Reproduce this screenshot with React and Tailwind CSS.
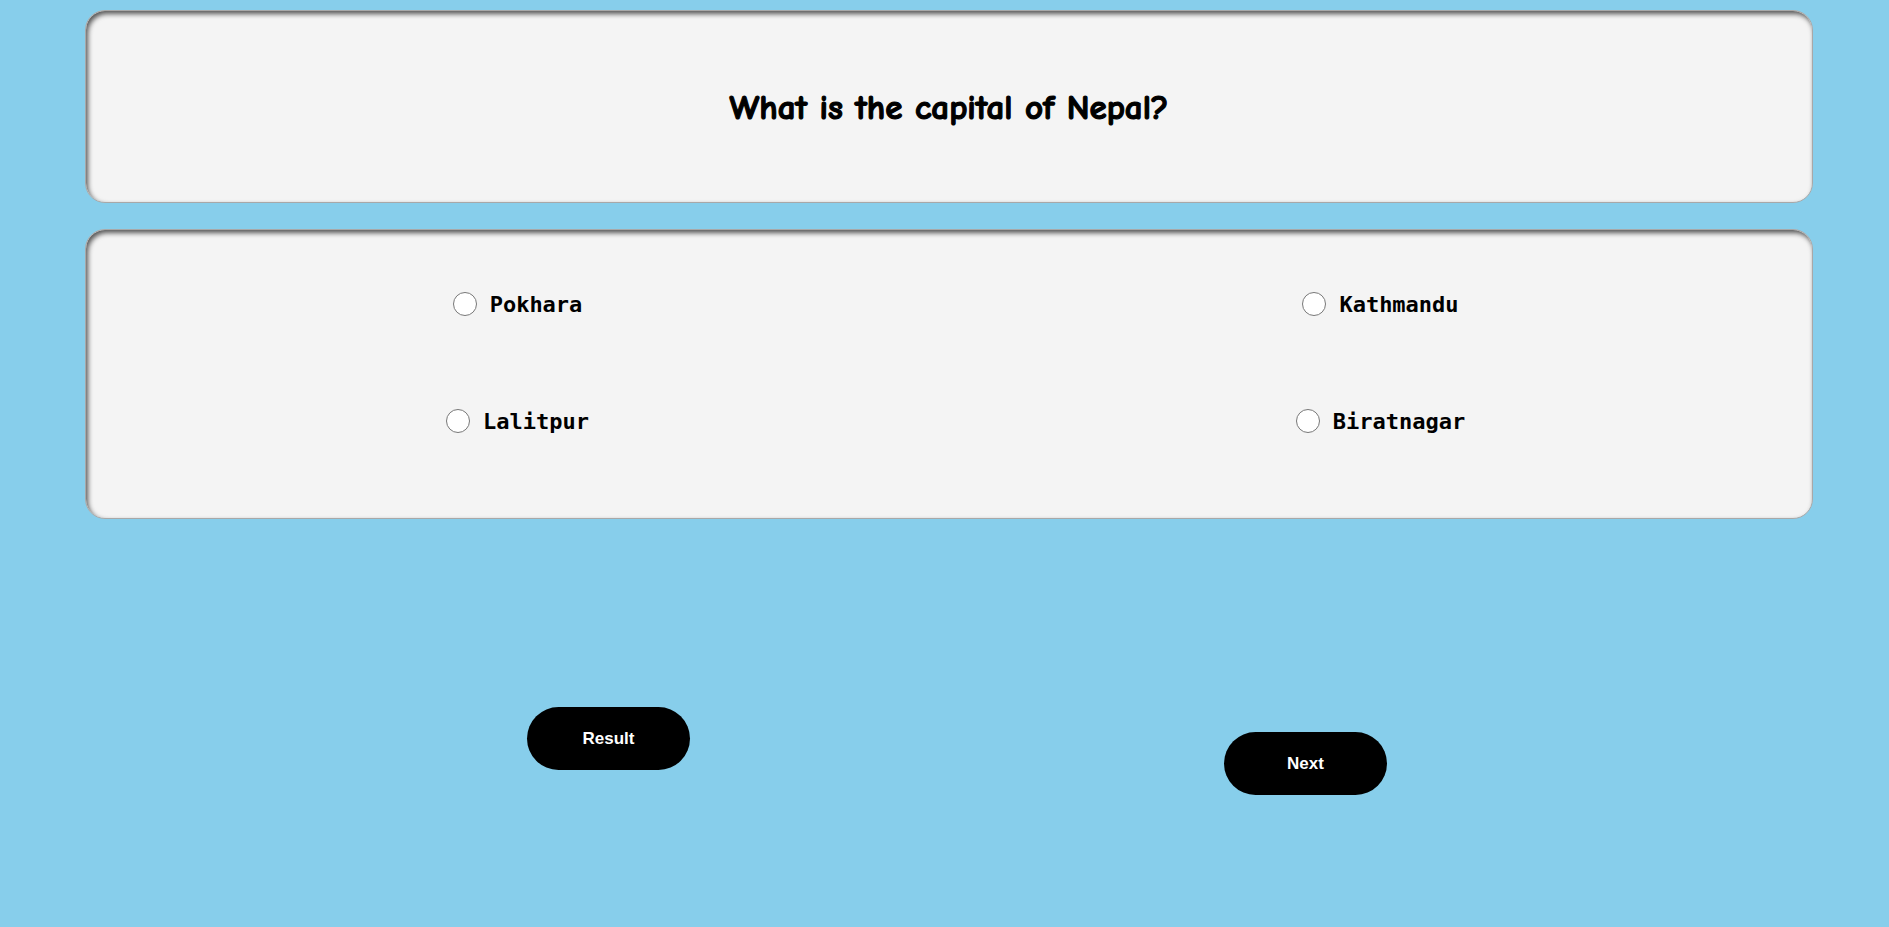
import { useState } from 'react';

const options = [
  { id: 'a', label: 'Pokhara' },
  { id: 'b', label: 'Kathmandu' },
  { id: 'c', label: 'Lalitpur' },
  { id: 'd', label: 'Biratnagar' },
];

export default function App() {
  const [selected, setSelected] = useState('');

  return (
    <div className="min-h-[927px] bg-[#87ceeb] pt-[10px]">
      {/* question */}
      <div className="ml-[85px] w-[1728px] h-[193px] flex items-center justify-center rounded-[20px] bg-[#f4f4f4] border border-[#a8a8a8] shadow-[inset_2px_3px_5px_rgba(0,0,0,0.65)]">
        <h1 className="mt-[4px] text-[35px] font-bold text-black [-webkit-text-stroke:1.2px_black] [font-family:'Comic_Sans_MS','Comic_Neue','DejaVu_Sans',sans-serif]">
          What is the capital of Nepal?
        </h1>
      </div>

      {/* options */}
      <div className="ml-[85px] mt-[26px] w-[1728px] h-[290px] rounded-[20px] bg-[#f4f4f4] border border-[#a8a8a8] shadow-[inset_2px_3px_5px_rgba(0,0,0,0.65)] grid grid-cols-2 gap-y-[93px] pt-[62px] content-start">
        {options.map(opt => (
          <label key={opt.id} className="flex items-center justify-center gap-[13px] h-[24px] cursor-pointer">
            <span
              onClick={() => setSelected(opt.id)}
              className="w-[24px] h-[24px] rounded-full border border-[#777] bg-white flex items-center justify-center"
            >
              {selected === opt.id && <span className="w-[14px] h-[14px] rounded-full bg-[#0075ff]" />}
            </span>
            <span
              onClick={() => setSelected(opt.id)}
              className="text-[22px] font-bold text-black [font-family:'DejaVu_Sans_Mono','Liberation_Mono',monospace]"
            >
              {opt.label}
            </span>
          </label>
        ))}
      </div>

      {/* buttons */}
      <div className="flex items-start mt-[188px]">
        <button className="ml-[527px] w-[163px] h-[63px] rounded-full bg-black text-white text-[17px] font-bold [font-family:'Liberation_Sans',Arial,sans-serif]">
          Result
        </button>
        <button className="ml-[534px] mt-[25px] w-[163px] h-[63px] rounded-full bg-black text-white text-[17px] font-bold [font-family:'Liberation_Sans',Arial,sans-serif]">
          Next
        </button>
      </div>
    </div>
  );
}
